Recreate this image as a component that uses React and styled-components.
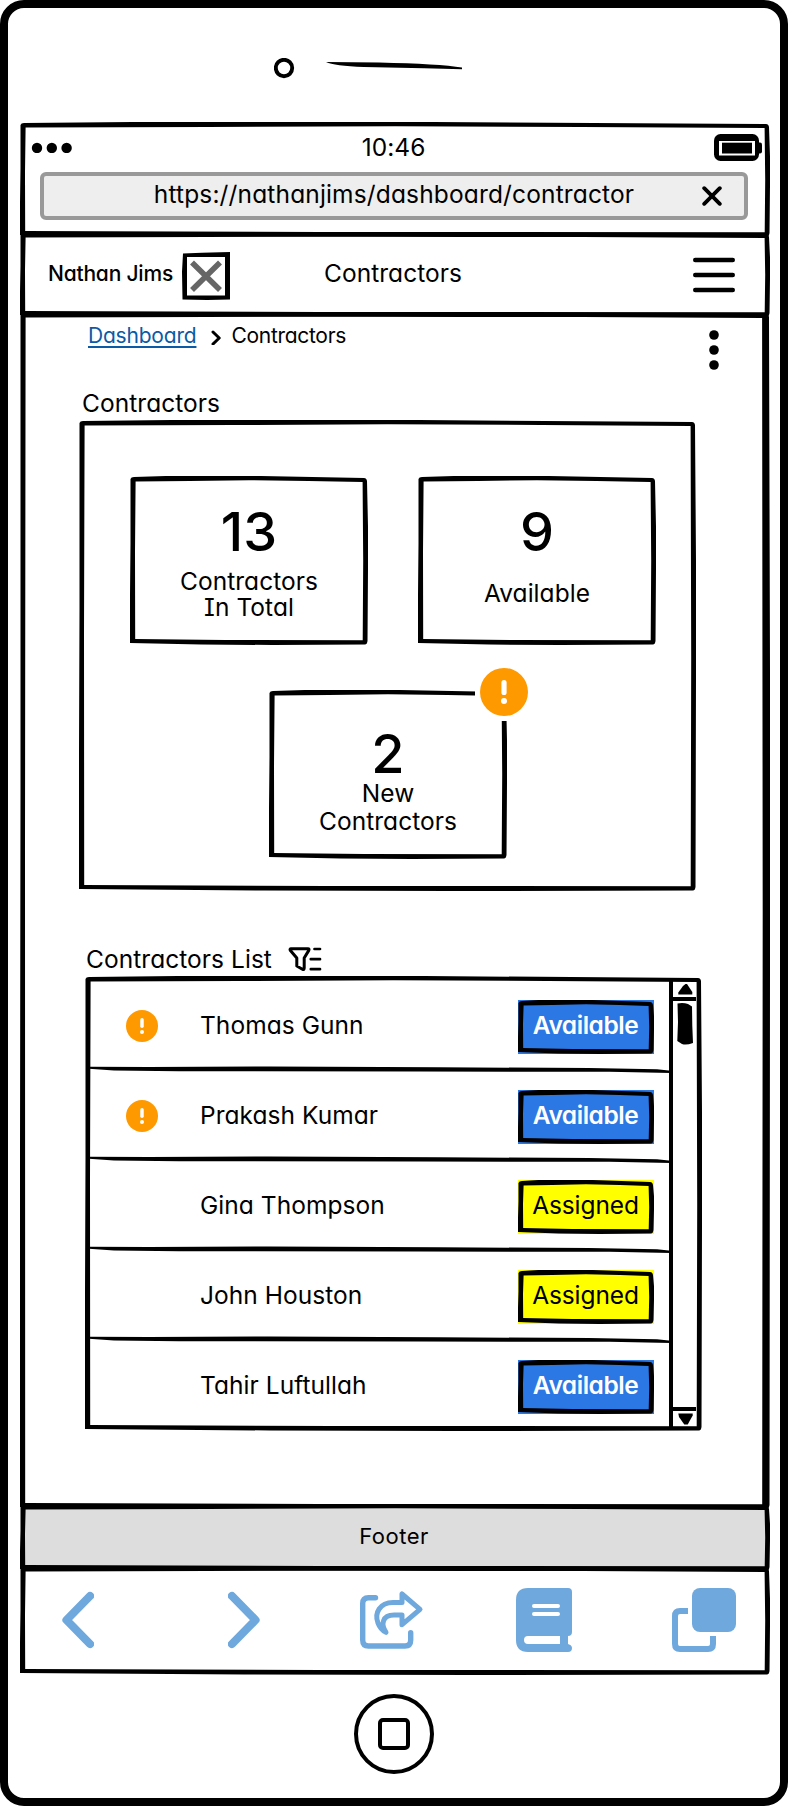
import React from "react";
import styled, { createGlobalStyle, css } from "styled-components";

const INK = "#000";
const BLUE = "#6fa8dc";
const ORANGE = "#ff9900";

const GlobalStyle = createGlobalStyle`
  *, *::before, *::after { box-sizing: border-box; }
  body {
    margin: 0;
    background: #fff;
    color: ${INK};
    font-family: Inter, "Liberation Sans", sans-serif;
    font-feature-settings: "cv11", "cv08";
    font-size: 24.5px;
    letter-spacing: 0.05px;
  }
  svg { display: block; flex: none; }
`;

/* ---------- hand-drawn outlines ---------- */

const FrameSvg = styled.svg`
  position: absolute;
  left: 0;
  top: 0;
  pointer-events: none;
`;

// A box outline whose four edges bow and change thickness slightly.
function SketchFrame({ w, h, t = 5, right = t }) {
  const outer = `M0.5 3 Q1 1 4 1 L${w * 0.15} 0 L${w * 0.55} 0 L${w - 4} 2 Q${w - 1.5} 2 ${w - 1} 5
    L${w} ${h * 0.3} L${w} ${h * 0.55} L${w - 0.5} ${h - 4} Q${w - 1} ${h - 0.5} ${w - 3} ${h - 0.5}
    L${w * 0.6} ${h} L${w * 0.3} ${h - 0.5} L0 ${h - 2} L0 ${h * 0.7} L0.5 ${h * 0.4} Z`;
  const inner = `M${t + 0.6} ${t + 0.4} L${t} ${h * 0.45} L${t + 0.2} ${h - t - 1} L${w * 0.4} ${h - t}
    L${w - right - 0.3} ${h - t + 0.2} L${w - right + 0.2} ${h * 0.5} L${w - right - 0.4} ${t + 1}
    L${w * 0.75} ${t} L${w * 0.5} ${t - 0.8} L${w * 0.25} ${t} Z`;
  return (
    <FrameSvg width={w} height={h} aria-hidden="true">
      <path d={outer + inner} fill={INK} fillRule="evenodd" />
    </FrameSvg>
  );
}

/* ---------- device ---------- */

const Phone = styled.div`
  width: 788px;
  height: 1806px;
  border: 8px solid ${INK};
  border-radius: 24px;
  background: #fff;
  overflow: hidden;
`;

const Speaker = styled.div`
  height: 114px;
  padding: 50px 0 0 266px;
  display: flex;
  align-items: flex-start;
`;

const Screen = styled.div`
  width: 750px;
  margin-left: 12px;
`;

const Section = styled.section`
  position: relative;
  height: ${(p) => p.$h}px;
  padding: ${(p) => p.$inset || 0}px;
  margin-top: -5px;
  &:first-child { margin-top: 0; }
`;

const StatusRow = styled.div`
  height: 50px;
  padding: 0 8px 0 11px;
  display: grid;
  grid-template-columns: 1fr auto 1fr;
  align-items: center;
  > :last-child { justify-self: end; }
`;

const Clock = styled.span`
  margin: 0 6px 1px 0;
`;

const UrlBar = styled.div`
  width: 708px;
  height: 48px;
  margin-left: 20px;
  border: 4px solid #999;
  border-radius: 6px;
  background: #eee;
  display: grid;
  grid-template-columns: 64px 1fr 64px;
  align-items: center;
  justify-items: center;
`;

const Url = styled.span`
  padding-bottom: 4px;
  letter-spacing: 0.15px;
  white-space: nowrap;
`;

const Header = styled.header`
  height: 100%;
  padding: 0 35px 0 28px;
  display: grid;
  grid-template-columns: 1fr auto 1fr;
  align-items: center;
  > :last-child { justify-self: end; }
`;

const User = styled.div`
  display: flex;
  align-items: center;
  gap: 9px;
  margin-top: 2px;
`;

const UserName = styled.span`
  font-size: 21px;
  font-weight: 500;
  letter-spacing: -0.2px;
  white-space: nowrap;
  padding-bottom: 5px;
`;

const Title = styled.h1`
  margin: 0 0 3px 3px;
  font-size: inherit;
  font-weight: 400;
`;

const Main = styled.main`
  padding: 10px 0 0 59px;
`;

const Toolbar = styled.div`
  height: 66px;
  padding: 0 51px 0 8px;
  display: flex;
  justify-content: space-between;
  align-items: flex-start;
`;

const Breadcrumb = styled.nav`
  display: flex;
  align-items: center;
  font-size: 21px;
  line-height: 28px;
  letter-spacing: -0.2px;
`;

const Crumb = styled.span`
  padding-left: 9px;
  letter-spacing: -0.3px;
`;

const CrumbLink = styled.a`
  color: #0b5aa5;
  padding: 0 1px;
  margin-right: 14px;
  text-decoration: underline;
  text-decoration-thickness: 1.5px;
  text-underline-offset: 3px;
  text-decoration-skip-ink: none;
`;

const SectionTitle = styled.h2`
  margin: ${(p) => p.$top || 0}px 0 2px;
  padding-left: ${(p) => p.$indent}px;
  display: flex;
  align-items: center;
  gap: 16px;
  font-size: inherit;
  font-weight: 400;
  line-height: 30px;
`;

const Panel = styled.div`
  position: relative;
  width: 617px;
  height: 471px;
  padding: 56px 39px 0 51px;
  display: flex;
  flex-direction: column;
  gap: 45px;
`;

const CardRow = styled.div`
  display: flex;
  gap: 50px;
  ${(p) => p.$centered && css`justify-content: center; padding-right: 11px;`}
`;

const Card = styled.div`
  position: relative;
  width: 238px;
  height: 169px;
  padding-top: ${(p) => p.$pad}px;
  text-align: center;
`;

const Figure = styled.div`
  font-size: 54px;
  font-weight: 500;
  line-height: 56px;
  letter-spacing: 0;
`;

const Caption = styled.div`
  margin-top: ${(p) => p.$gap}px;
  line-height: ${(p) => p.$leading || 26}px;
`;

const CardAlert = styled.div`
  position: absolute;
  left: 206px;
  top: -27px;
  padding: 5px;
  background: #fff;
`;

const List = styled.div`
  position: relative;
  width: 617px;
  height: 455px;
  margin-left: 5.5px;
  padding-left: 4.5px;
  display: flex;
`;

const Rows = styled.div`
  width: 582px;
  padding-top: 6px;
`;

const Row = styled.div`
  position: relative;
  height: 90px;
  padding: 0 17px 0 37px;
  display: grid;
  grid-template-columns: 73.5px 1fr 136px;
  align-items: center;
  > svg:first-child { margin-bottom: 2px; }
`;

const Name = styled.span`
  grid-column: 2;
  padding: 0 0 4px 0.5px;
`;

const Tag = styled.span`
  position: relative;
  grid-column: 3;
  width: 136px;
  height: 54px;
  padding: 0 1px 4px 0;
  display: flex;
  align-items: center;
  justify-content: center;
  ${(p) =>
    p.$status === "Available"
      ? css`background: #2b78e4; color: #fff; font-weight: 600; letter-spacing: -0.45px;`
      : css`background: #ffff00; color: #000; letter-spacing: -0.1px;`}
`;

const TagLabel = styled.span`
  position: relative;
`;

const Divider = styled.svg`
  position: absolute;
  left: 0;
  bottom: -1px;
`;

const Scrollbar = styled.div`
  width: 31px;
  margin: 2px 0 1px -2px;
  padding: 3px 4px 3px 0;
  border-left: 4px solid ${INK};
  display: flex;
  flex-direction: column;
`;

const ScrollButton = styled.div`
  height: 20px;
  padding-left: 1px;
  display: flex;
  justify-content: center;
  align-items: center;
  ${(p) => (p.$end ? css`border-top: 4px solid ${INK};` : css`border-bottom: 4px solid ${INK};`)}
`;

const Track = styled.div`
  flex: 1;
  padding-top: 1px;
  display: flex;
  justify-content: center;
  align-items: flex-start;
`;

const Footer = styled.footer`
  height: 100%;
  padding: 0 2px 3px 0;
  background: #ddd;
  display: flex;
  align-items: center;
  justify-content: center;
  font-size: 22px;
  letter-spacing: 0.5px;
`;

const BrowserNav = styled.nav`
  height: 100%;
  padding: 0 0 2px 42px;
  display: grid;
  grid-template-columns: 166px 132px 156px 156px 64px;
  align-items: center;
`;

const HomeButton = styled.div`
  width: 80px;
  height: 80px;
  margin: 19px auto 0;
  border: 4px solid ${INK};
  border-radius: 50%;
  display: flex;
  align-items: center;
  justify-content: center;
  &::before {
    content: "";
    width: 32px;
    height: 32px;
    border: 4px solid ${INK};
    border-radius: 5px;
  }
`;

/* ---------- icons ---------- */

const Camera = () => (
  <svg width="200" height="24" viewBox="0 0 200 24">
    <circle cx="10" cy="10" r="8.2" fill="none" stroke={INK} strokeWidth="3.9" />
    <path d="M52 4 L105 4.6 Q165 6 188 9.6 V11.2 L150 10.2 L90 9 Q60 8 52 4Z" fill={INK} />
  </svg>
);

const SignalDots = () => (
  <svg width="42" height="12" viewBox="0 0 42 12">
    {[6, 20.8, 35.6].map((x) => <circle key={x} cx={x} cy="7" r="5.2" fill={INK} />)}
  </svg>
);

const Battery = () => (
  <svg width="48" height="27" viewBox="0 0 48 27">
    <rect width="45" height="27" rx="6.5" fill={INK} />
    <rect x="43" y="8.5" width="5" height="11" rx="2" fill={INK} />
    <rect x="5" y="7" width="36" height="14.5" fill="#fff" />
    <rect x="8" y="8.7" width="30" height="10.8" fill={INK} />
  </svg>
);

const CloseIcon = () => (
  <svg width="20" height="20" viewBox="0 0 20 20">
    <path d="M2.2 2.2 L17.8 17.8 M17.8 2.2 L2.2 17.8" stroke={INK} strokeWidth="3.8" strokeLinecap="round" />
  </svg>
);

const Avatar = () => (
  <svg width="48" height="48" viewBox="0 0 48 48">
    <path fillRule="evenodd" fill={INK} d="M1 1.5 L20 0.8 L48 0 V47.5 L25 48 L0.5 47.5 L0 20Z M5 5 V43.5 H43 V5Z" />
    <path d="M10 10.5 L38 38 M38 10.5 L10 38" stroke="#666" strokeWidth="5.6" />
  </svg>
);

const MenuIcon = () => (
  <svg width="42" height="36" viewBox="0 0 42 36">
    <path d="M2.2 3 H39.8 M2.2 18 H39.8 M2.2 33 H39.8" stroke={INK} strokeWidth="4.4" strokeLinecap="round" />
  </svg>
);

const KebabIcon = () => (
  <svg width="10" height="50" viewBox="0 0 10 50">
    {[13, 28, 43].map((y) => <circle key={y} cx="5" cy={y} r="4.8" fill={INK} />)}
  </svg>
);

const CrumbArrow = () => (
  <svg width="11" height="18" viewBox="0 0 11 18">
    <path d="M2 5 L8.2 11 L2 17" fill="none" stroke={INK} strokeWidth="3" strokeLinecap="round" strokeLinejoin="round" />
  </svg>
);

const AlertIcon = ({ size }) => (
  <svg width={size} height={size} viewBox="0 0 48 48">
    <circle cx="24" cy="24" r="24" fill={ORANGE} />
    <path d="M24 14.5 V24.5" stroke="#fff" strokeWidth="5.2" strokeLinecap="round" />
    <circle cx="24" cy="33" r="3" fill="#fff" />
  </svg>
);

const FilterIcon = () => (
  <svg width="34" height="26" viewBox="0 0 34 26">
    <g fill="none" stroke={INK} strokeWidth="3" strokeLinecap="round" strokeLinejoin="round">
      <path d="M3 2.8 H20 Q21.6 2.8 20.8 4.4 L16.2 12 V22 Q16.2 24.2 14.4 23.2 L8.8 20 V12 L2.2 4.2 Q1.6 2.8 3 2.8Z" />
      <path d="M26.5 3 H32 M22.8 13.2 H32 M22.8 23.2 H32" strokeWidth="2.7" />
    </g>
  </svg>
);

const Chevron = ({ d }) => (
  <svg width="32" height="64" viewBox="0 0 32 64">
    <path d={d} fill="none" stroke={BLUE} strokeWidth="8.2" strokeLinecap="round" strokeLinejoin="round" />
  </svg>
);

const ShareIcon = () => (
  <svg width="64" height="64" viewBox="0 0 64 64">
    <g fill="none" stroke={BLUE} strokeWidth="5.4" strokeLinecap="round" strokeLinejoin="round">
      <path d="M15.5 9.7 H8.5 Q2.7 9.7 2.7 15.5 V52 Q2.7 58 8.5 58 H45 Q50.7 58 50.7 52 V44.7" />
      <path d="M42 6 V14.5 H33 C20 14.5 14 25 18 35 C19.5 39 22.5 42.5 26 44.3 C20.5 36 22.5 27 34 27 H42 V36.7 L60 21.4 Z" strokeWidth="5" />
    </g>
  </svg>
);

const BookIcon = () => (
  <svg width="56" height="64" viewBox="0 0 56 64">
    <path
      fill={BLUE}
      fillRule="evenodd"
      d="M12 0 H52 Q56 0 56 4 V44 Q56 48 52 48 V56 Q56 57 56 60 Q56 64 52 64 H12 Q0 64 0 52 V12 Q0 0 12 0Z
         M12 48 A4 4 0 0 0 12 56 H44 V48Z
         M18 16 A2 2 0 0 0 18 20 H42 A2 2 0 0 0 42 16Z
         M18 24 A2 2 0 0 0 18 28 H42 A2 2 0 0 0 42 24Z"
    />
  </svg>
);

const TabsIcon = () => (
  <svg width="64" height="64" viewBox="0 0 64 64">
    <rect x="20" width="44" height="44" rx="8" fill={BLUE} />
    <path d="M16 23 H8 Q3 23 3 28 V56 Q3 61 8 61 H36 Q41 61 41 56 V48" fill="none" stroke={BLUE} strokeWidth="6" />
  </svg>
);

const UpArrow = () => (
  <svg width="15" height="12" viewBox="0 0 15 12">
    <path d="M7.5 1 L9 1 L14.3 9 V11.5 H0.3 V9.5 L5 3Z" fill={INK} />
  </svg>
);

const DownArrow = () => (
  <svg width="15" height="12" viewBox="0 0 15 12">
    <path d="M0.3 0.5 H14.7 V2.5 L9.7 11.5 H6.3 L1 4Z" fill={INK} />
  </svg>
);

const Thumb = () => (
  <svg width="16" height="43" viewBox="0 0 16 43">
    <path d="M0.5 1.5 Q6 0.3 11 2 L15 4.5 L15.3 24 L16 41 Q9 43.5 5 42 L0.3 39 L1 20Z" fill={INK} />
  </svg>
);

const RowLine = () => (
  <Divider width="582" height="7" viewBox="0 0 582 7">
    <path d="M0 0.8 L60 0.9 L180 0.5 L350 1.3 L500 2 L568 3.2 L582 4.8 V7 L520 5.8 L330 5.6 L90 5.2 L25 4.4 L0 2.8Z" fill={INK} />
  </Divider>
);

/* ---------- page ---------- */

const CONTRACTORS = [
  { name: "Thomas Gunn", status: "Available", isNew: true },
  { name: "Prakash Kumar", status: "Available", isNew: true },
  { name: "Gina Thompson", status: "Assigned" },
  { name: "John Houston", status: "Assigned" },
  { name: "Tahir Luftullah", status: "Available" },
];

function StatCard({ value, pad = 28, gap, leading, alert, children }) {
  return (
    <Card $pad={pad}>
      <SketchFrame w={238} h={169} />
      <Figure>{value}</Figure>
      <Caption $gap={gap} $leading={leading}>{children}</Caption>
      {alert && <CardAlert><AlertIcon size={48} /></CardAlert>}
    </Card>
  );
}

export default function App() {
  return (
    <>
      <GlobalStyle />
      <Phone>
        <Speaker><Camera /></Speaker>
        <Screen>
          <Section $h={115}>
            <SketchFrame w={750} h={115} />
            <StatusRow>
              <SignalDots />
              <Clock>10:46</Clock>
              <Battery />
            </StatusRow>
            <UrlBar>
              <span />
              <Url>https://nathanjims/dashboard/contractor</Url>
              <CloseIcon />
            </UrlBar>
          </Section>

          <Section $h={85}>
            <SketchFrame w={750} h={85} />
            <Header>
              <User>
                <UserName>Nathan Jims</UserName>
                <Avatar />
              </User>
              <Title>Contractors</Title>
              <MenuIcon />
            </Header>
          </Section>

          <Section $h={1197}>
            <SketchFrame w={750} h={1197} right={7.5} />
            <Main>
              <Toolbar>
                <Breadcrumb>
                  <CrumbLink>Dashboard</CrumbLink>
                  <CrumbArrow />
                  <Crumb>Contractors</Crumb>
                </Breadcrumb>
                <KebabIcon />
              </Toolbar>

              <SectionTitle $indent={3}>Contractors</SectionTitle>
              <Panel>
                <SketchFrame w={617} h={471} />
                <CardRow>
                  <StatCard value="13" gap={8}>Contractors<br />In Total</StatCard>
                  <StatCard value="9" gap={20}>Available</StatCard>
                </CardRow>
                <CardRow $centered>
                  <StatCard value="2" pad={36} gap={-3} leading={28} alert>New<br />Contractors</StatCard>
                </CardRow>
              </Panel>

              <SectionTitle $indent={7} $top={53}>Contractors List <FilterIcon /></SectionTitle>
              <List>
                <SketchFrame w={617} h={455} />
                <Rows>
                  {CONTRACTORS.map((c, i) => (
                    <Row key={c.name}>
                      {c.isNew && <AlertIcon size={32} />}
                      <Name>{c.name}</Name>
                      <Tag $status={c.status}>
                        <SketchFrame w={136} h={54} />
                        <TagLabel>{c.status}</TagLabel>
                      </Tag>
                      {i < CONTRACTORS.length - 1 && <RowLine />}
                    </Row>
                  ))}
                </Rows>
                <Scrollbar>
                  <ScrollButton><UpArrow /></ScrollButton>
                  <Track><Thumb /></Track>
                  <ScrollButton $end><DownArrow /></ScrollButton>
                </Scrollbar>
              </List>
            </Main>
          </Section>

          <Section $h={67} $inset={3}>
            <Footer>Footer</Footer>
            <SketchFrame w={750} h={67} />
          </Section>

          <Section $h={109}>
            <SketchFrame w={750} h={109} />
            <BrowserNav>
              <Chevron d="M28 8 L4.5 32 L28 56" />
              <Chevron d="M4 8 L27.5 32 L4 56" />
              <ShareIcon />
              <BookIcon />
              <TabsIcon />
            </BrowserNav>
          </Section>
        </Screen>
        <HomeButton />
      </Phone>
    </>
  );
}
